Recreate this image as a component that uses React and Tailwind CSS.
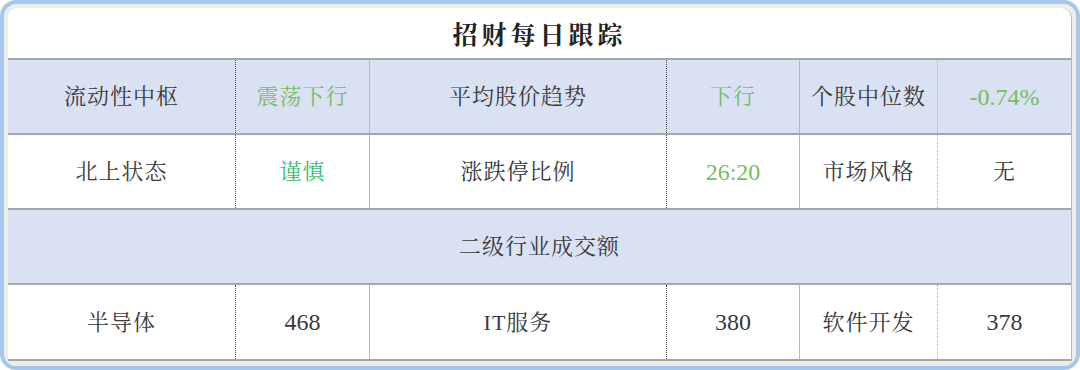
import React from 'react';

const font = { fontFamily: '"Liberation Serif", "Noto Serif CJK SC", "Noto Sans CJK SC", serif' };

const cols = 'grid grid-cols-[228px_134px_297px_133px_138px_133px]';

const dotted = 'border-r border-dotted border-r-[#4a4a4a]';
const solid = 'border-r border-solid border-r-[#b8b8b8]';
const dottedLight = 'border-r border-dotted border-r-[#b0b0b0]';
const edgeLines = [dotted, solid, dotted, solid, dottedLight, ''];

function Cell({ children, line, green, mint, num }) {
  let color = 'text-[#3a3a3a]';
  if (green) color = 'text-[#79bc62]';
  if (mint) color = 'text-[#3dbb6c]';
  const size = num ? 'text-[24px]' : 'text-[22px] tracking-[1px]';
  return (
    <div className={`flex items-center justify-center h-full ${size} ${color} ${line}`}>
      {children}
    </div>
  );
}

export default function App() {
  const row1 = [
    { t: '流动性中枢' },
    { t: '震荡下行', green: true },
    { t: '平均股价趋势' },
    { t: '下行', green: true },
    { t: '个股中位数' },
    { t: '-0.74%', green: true, num: true },
  ];
  const row2 = [
    { t: '北上状态' },
    { t: '谨慎', mint: true },
    { t: '涨跌停比例' },
    { t: '26:20', green: true, num: true },
    { t: '市场风格' },
    { t: '无' },
  ];
  const row4 = [
    { t: '半导体' },
    { t: '468', num: true },
    { t: 'IT服务' },
    { t: '380', num: true },
    { t: '软件开发' },
    { t: '378', num: true },
  ];

  return (
    <div className="w-[1080px] h-[370px] bg-white" style={font}>
      <div className="w-full h-full rounded-[16px] border-[4px] border-[#a5c7ea] bg-[#ececec] pt-[4px] pl-[4px] pr-[4px] pb-[5px] flex">
        <div className="flex-1 flex flex-col bg-white rounded-t-[10px] border-r border-[#b8b8b8]">
          <div className="h-[52px] flex items-center justify-center border-b-2 border-[#a6a6a6] pt-[5px]">
            <span className="text-[25px] font-bold tracking-[4px] text-[#222]">招财每日跟踪</span>
          </div>
          <div className={`${cols} h-[75px] bg-[#d9e1f2] border-b-2 border-[#a6a6a6]`}>
            {row1.map((c, i) => (
              <Cell key={i} line={edgeLines[i]} green={c.green} mint={c.mint} num={c.num}>{c.t}</Cell>
            ))}
          </div>
          <div className={`${cols} h-[75px] border-b-2 border-[#a6a6a6]`}>
            {row2.map((c, i) => (
              <Cell key={i} line={edgeLines[i]} green={c.green} mint={c.mint} num={c.num}>{c.t}</Cell>
            ))}
          </div>
          <div className="h-[75px] bg-[#d9e1f2] border-b-2 border-[#a6a6a6] flex items-center justify-center">
            <span className="text-[22px] tracking-[1px] text-[#3a3a3a]">二级行业成交额</span>
          </div>
          <div className={`${cols} flex-1 border-b-2 border-[#a6a6a6]`}>
            {row4.map((c, i) => (
              <Cell key={i} line={edgeLines[i]} num={c.num}>{c.t}</Cell>
            ))}
          </div>
        </div>
      </div>
    </div>
  );
}
